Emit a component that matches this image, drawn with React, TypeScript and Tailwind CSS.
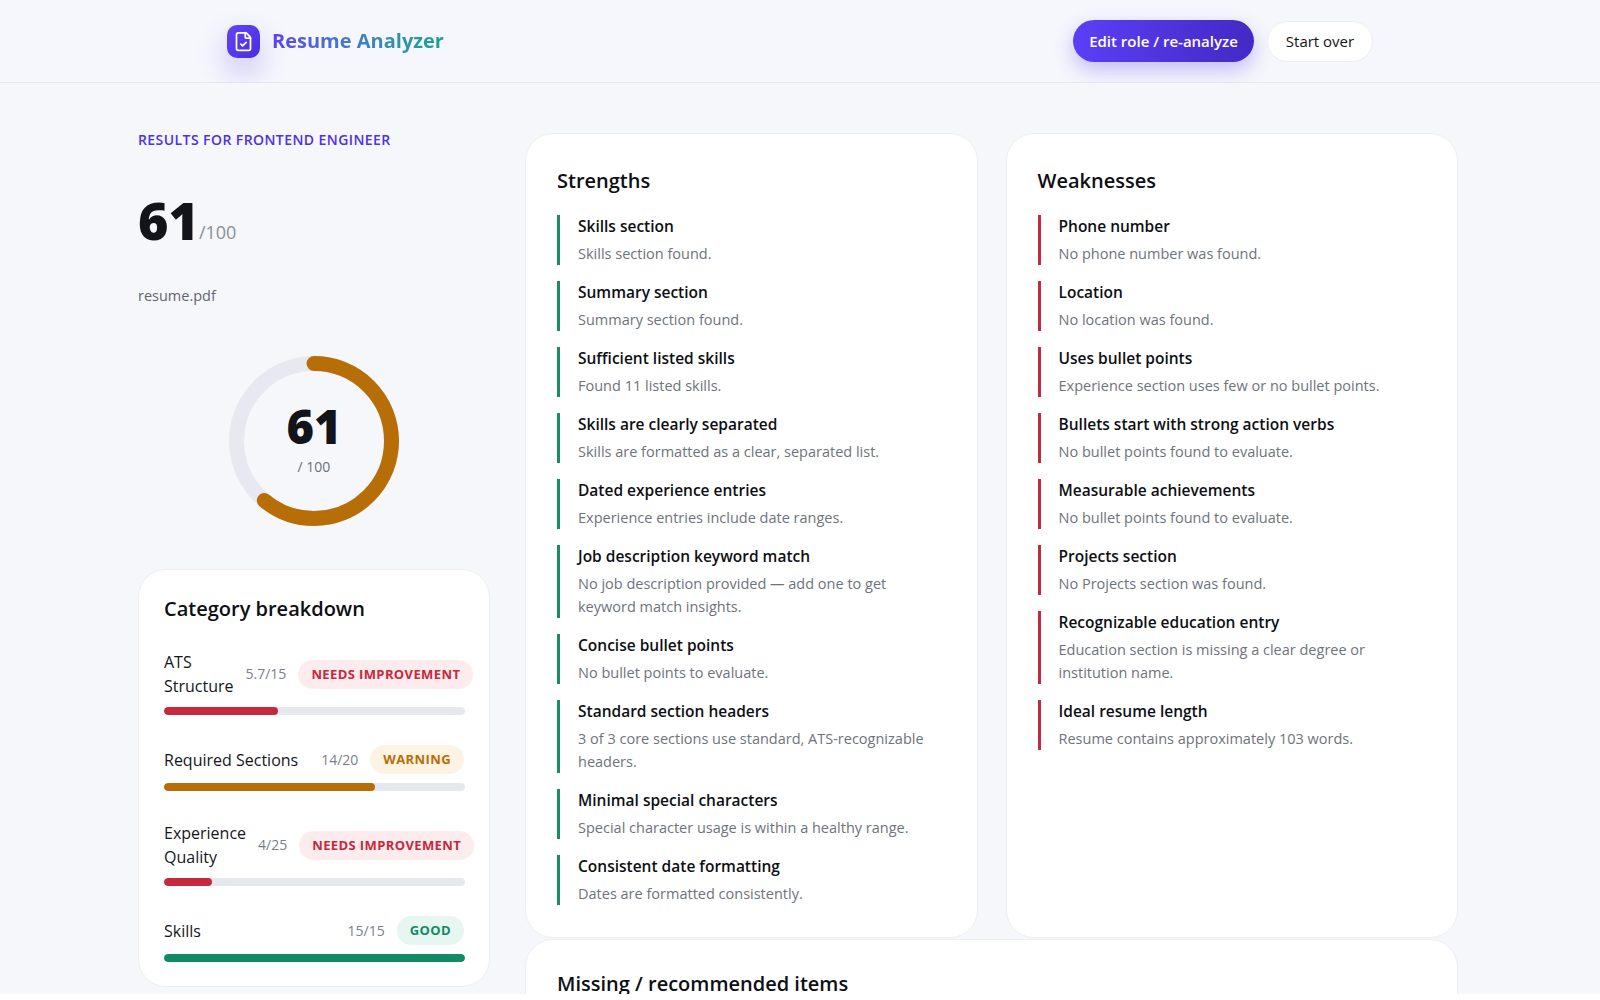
import { FileCheck } from "lucide-react";

type Item = { title: string; desc: string };

const strengths: Item[] = [
  { title: "Skills section", desc: "Skills section found." },
  { title: "Summary section", desc: "Summary section found." },
  { title: "Sufficient listed skills", desc: "Found 11 listed skills." },
  { title: "Skills are clearly separated", desc: "Skills are formatted as a clear, separated list." },
  { title: "Dated experience entries", desc: "Experience entries include date ranges." },
  { title: "Job description keyword match", desc: "No job description provided — add one to get keyword match insights." },
  { title: "Concise bullet points", desc: "No bullet points to evaluate." },
  { title: "Standard section headers", desc: "3 of 3 core sections use standard, ATS-recognizable headers." },
  { title: "Minimal special characters", desc: "Special character usage is within a healthy range." },
  { title: "Consistent date formatting", desc: "Dates are formatted consistently." },
];

const weaknesses: Item[] = [
  { title: "Phone number", desc: "No phone number was found." },
  { title: "Location", desc: "No location was found." },
  { title: "Uses bullet points", desc: "Experience section uses few or no bullet points." },
  { title: "Bullets start with strong action verbs", desc: "No bullet points found to evaluate." },
  { title: "Measurable achievements", desc: "No bullet points found to evaluate." },
  { title: "Projects section", desc: "No Projects section was found." },
  { title: "Recognizable education entry", desc: "Education section is missing a clear degree or institution name." },
  { title: "Ideal resume length", desc: "Resume contains approximately 103 words." },
];

const categories = [
  { name: "ATS Structure", score: "5.7/15", pct: 38, badge: "Needs improvement", badgeCls: "bg-[#fdecee] text-[#c6283d]", barCls: "bg-[#c6283d]" },
  { name: "Required Sections", score: "14/20", pct: 70, badge: "Warning", badgeCls: "bg-[#fdf3e3] text-[#b86e06]", barCls: "bg-[#b86e06]" },
  { name: "Experience Quality", score: "4/25", pct: 16, badge: "Needs improvement", badgeCls: "bg-[#fdecee] text-[#c6283d]", barCls: "bg-[#c6283d]" },
  { name: "Skills", score: "15/15", pct: 100, badge: "Good", badgeCls: "bg-[#e7f6f0] text-[#138a66]", barCls: "bg-[#138a66]" },
];

function ScoreRing() {
  return (
    <div className="relative mx-auto h-[170px] w-[170px]">
      <svg viewBox="0 0 170 170" className="h-full w-full -rotate-90">
        <circle cx="85" cy="85" r="77.5" fill="none" stroke="#e8e9f0" strokeWidth="15" />
        <circle cx="85" cy="85" r="77.5" fill="none" stroke="#b86e06" strokeWidth="15" strokeLinecap="round" strokeDasharray="297 487" />
      </svg>
      <div className="absolute inset-0 flex flex-col items-center justify-center">
        <span className="text-[47px] leading-none font-extrabold text-[#12141a] mt-[-2px]">61</span>
        <span className="mt-[7px] text-sm leading-5 text-[#6b7079]">/ 100</span>
      </div>
    </div>
  );
}

function ListCard({ title, items, barCls }: { title: string; items: Item[]; barCls: string }) {
  return (
    <section className="rounded-[28px] border border-[#eceef3] bg-white px-[31px] pt-[31px] pb-[32px]">
      <h2 className="text-xl leading-[32px] font-semibold text-[#0d0f14]">{title}</h2>
      <ul className="mt-[18px] flex flex-col gap-4">
        {items.map((item) => (
          <li key={item.title} className={`border-l-[3px] pl-[18px] ${barCls}`}>
            <div className="text-[15.5px] leading-[23px] font-semibold text-[#0d0f14]">{item.title}</div>
            <p className="mt-1 text-[14.5px] leading-[23px] text-[#6e737c]">{item.desc}</p>
          </li>
        ))}
      </ul>
    </section>
  );
}

export default function App() {
  return (
    <div className="flex h-[994px] flex-col overflow-hidden bg-[#f5f7fb] font-['Open_Sans',sans-serif]">
      <header className="h-[83px] shrink-0 border-b border-[#e8e9ef] bg-[#f6f7fc]">
        <div className="mx-auto flex h-full w-[1146px] items-center justify-between">
          <div className="flex items-center gap-3">
            <div className="flex h-[33px] w-[33px] items-center justify-center rounded-[10px] bg-gradient-to-br from-[#6344f8] to-[#4b2de0] text-white shadow-[0_14px_30px_rgba(79,47,232,0.28)]">
              <FileCheck size={21} strokeWidth={2} />
            </div>
            <span className="bg-gradient-to-r from-[#5b3ff0] to-[#0ea58e] bg-clip-text text-xl font-bold text-transparent">Resume Analyzer</span>
          </div>
          <div className="flex items-center gap-[13px]">
            <button className="h-[42px] w-[181px] rounded-full bg-gradient-to-r from-[#5b3ff6] to-[#4329c4] text-[15px] font-semibold text-white shadow-[0_8px_20px_rgba(79,47,232,0.3)]">Edit role / re-analyze</button>
            <button className="h-[41px] w-[106px] rounded-full border border-[#eceef3] bg-white text-[15px] font-medium text-[#12141a]">Start over</button>
          </div>
        </div>
      </header>

      <main className="min-h-0 flex-1 overflow-hidden bg-[#f5f7fb] pt-[50px] pl-[138px]">
        <div className="grid w-[1320px] grid-cols-[352px_minmax(0,1fr)] gap-x-[35px]">
          <aside>
            <div className="text-sm leading-none font-semibold tracking-[0.03em] text-[#4f2fe8]">RESULTS FOR FRONTEND ENGINEER</div>
            <div className="mt-[43px] flex items-end">
              <span className="text-[52px] leading-[60px] font-extrabold text-[#12141a]">61</span>
              <span className="mb-[6px] text-lg leading-6 text-[#8a8f98]">/100</span>
            </div>
            <div className="mt-[36px] text-[14.5px] leading-5 text-[#5f6570]">resume.pdf</div>
            <div className="mt-[50px]"><ScoreRing /></div>

            <section className="mt-[43px] rounded-[28px] border border-[#eceef3] bg-white px-[25px] pt-[23px] pb-6">
              <h2 className="text-xl leading-8 font-semibold text-[#0d0f14]">Category breakdown</h2>
              <div className="mt-[25px] flex flex-col gap-[30px]">
                {categories.map((c) => (
                  <div key={c.name}>
                    <div className="flex items-center gap-3">
                      <span className="text-base leading-6 text-[#14161c]">{c.name}</span>
                      <span className="ml-auto shrink-0 text-sm text-[#7a7f88]">{c.score}</span>
                      <span className={`shrink-0 rounded-full px-[13px] py-[5px] text-[13px] leading-[19px] font-bold tracking-[0.03em] whitespace-nowrap uppercase ${c.badgeCls}`}>{c.badge}</span>
                    </div>
                    <div className="mt-[9px] h-2 w-[301px] overflow-hidden rounded-full bg-[#e6e8ed]">
                      <div className={`h-full rounded-full ${c.barCls}`} style={{ width: `${c.pct}%` }} />
                    </div>
                  </div>
                ))}
              </div>
            </section>
          </aside>

          <div className="grid grid-cols-2 gap-x-[28px] gap-y-px">
            <ListCard title="Strengths" items={strengths} barCls="border-[#1f8a68]" />
            <ListCard title="Weaknesses" items={weaknesses} barCls="border-[#c6283d]" />
            <section className="col-span-2 rounded-[28px] border border-[#eceef3] bg-white px-[31px] pt-[28px] pb-8">
              <h2 className="text-xl leading-8 font-semibold text-[#0d0f14]">Missing / recommended items</h2>
            </section>
          </div>
        </div>
      </main>
    </div>
  );
}
